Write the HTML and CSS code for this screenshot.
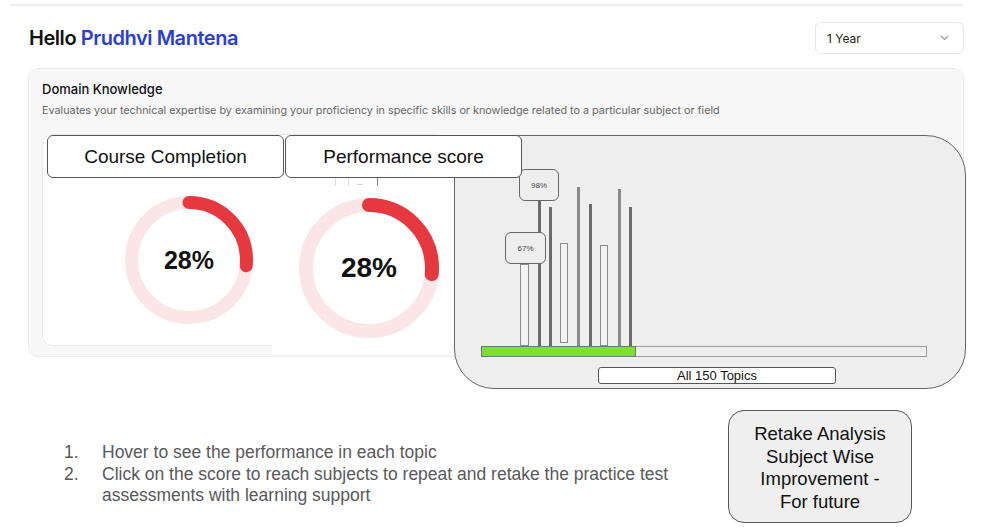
FILE: index.html
```html
<!DOCTYPE html>
<html lang="en">
<head>
  <meta charset="UTF-8" />
  <meta name="viewport" content="width=device-width, initial-scale=1.0" />
  <title>Domain Knowledge</title>
  <link rel="stylesheet" href="styles.css">
</head>
<body>

  <div class="topline"></div>

  <div class="header">
    <h1>Hello <span class="name">Prudhvi Mantena</span></h1>
    <div class="select">
      <span>1 Year</span>
      <svg width="9" height="6" viewBox="0 0 9 6"><path d="M1 1l3.5 3.5L8 1" fill="none" stroke="#999" stroke-width="1.1"/></svg>
    </div>
  </div>

  <div class="stage">
    <div class="card">
      <div class="card-title">Domain Knowledge</div>
      <div class="card-desc">Evaluates your technical expertise by examining your proficiency in specific skills or knowledge related to a particular subject or field</div>
      <div class="inner">
        <div class="donut donut-sm">
          <svg width="128" height="128" viewBox="0 0 128 128">
            <circle cx="64" cy="64" r="57.5" fill="none" stroke="#fbe6e7" stroke-width="13"/>
            <circle cx="64" cy="64" r="57.5" fill="none" stroke="#e5393f" stroke-width="13" stroke-linecap="round"
                    stroke-dasharray="96 400" transform="rotate(-90 64 64)"/>
          </svg>
          <span class="pct">28%</span>
        </div>
      </div>
    </div>

    <!-- pasted second chart -->
    <div class="snippet">
      <div class="crumbs"><i></i><b>--</b><i class="dark"></i></div>
      <div class="donut donut-lg">
        <svg width="140" height="140" viewBox="0 0 140 140">
          <circle cx="70" cy="70" r="63" fill="none" stroke="#fbe6e7" stroke-width="14"/>
          <circle cx="70" cy="70" r="63" fill="none" stroke="#e5393f" stroke-width="14" stroke-linecap="round"
                  stroke-dasharray="105 400" transform="rotate(-90 70 70)"/>
        </svg>
        <span class="pct">28%</span>
      </div>
    </div>

    <div class="panel">
      <div class="chart">
        <div class="bar hollow" style="left:39px;width:9px;height:82px"></div>
        <div class="bar line" style="left:57px;width:3px;height:146px"></div>
        <div class="bar line" style="left:68px;height:139px"></div>
        <div class="bar hollow" style="left:79px;width:8px;height:100px;bottom:3px"></div>
        <div class="bar line light" style="left:96px;height:159px"></div>
        <div class="bar line" style="left:108px;height:142px"></div>
        <div class="bar hollow" style="left:119px;width:8px;height:101px"></div>
        <div class="bar line light" style="left:137px;height:157px"></div>
        <div class="bar line" style="left:148px;height:139px"></div>

        <div class="tip" style="left:38px;top:33px;width:40px">98%</div>
        <div class="tip" style="left:24px;top:96px;width:41px">67%</div>
      </div>
      <div class="track"><div class="fill" style="width:153px"></div></div>
      <div class="topics">All 150 Topics</div>
    </div>

    <div class="labels">
      <div class="label-box">Course Completion</div>
      <div class="label-box">Performance score</div>
    </div>
  </div>

  <div class="notes">
    <ol class="steps">
      <li><span class="num">1.</span><span>Hover to see the performance in each topic</span></li>
      <li><span class="num">2.</span><span>Click on the score to reach subjects to repeat and retake the practice test assessments with learning support</span></li>
    </ol>
    <div class="retake">Retake Analysis Subject Wise Improvement - For future</div>
  </div>

</body>
</html>
```

FILE: styles.css
```css
* { box-sizing: border-box; }

html, body {
  margin: 0;
  padding: 0;
  background: #fff;
  color: #111;
  font-family: Inter, 'Liberation Sans', sans-serif;
  width: 981px;
  height: 532px;
  overflow: hidden;
}

.topline {
  height: 2px;
  margin: 4px 18px 0 10px;
  background: #efefef;
}

.header {
  display: flex;
  align-items: center;
  justify-content: space-between;
  height: 32px;
  margin-top: 16px;
  padding: 0 17px 0 29px;
}

h1 {
  margin: 0;
  font-size: 20px;
  font-weight: 600;
  letter-spacing: -0.45px;
}

h1 .name { color: #2b3dd3; }

.select {
  display: flex;
  align-items: center;
  justify-content: space-between;
  width: 149px;
  height: 32px;
  padding: 0 14px 0 11px;
  border: 1px solid #e7e7e7;
  border-radius: 6px;
  font-size: 12px;
  color: #222;
}

.stage {
  position: relative;
  margin-top: 14px;
  padding: 0 17px 0 28px;
}

.card {
  height: 289px;
  padding: 13px 13px 0;
  background: #f7f7f7;
  border: 1px solid #ececec;
  border-radius: 10px;
}

.card-title {
  font-size: 13px;
  font-weight: 500;
  line-height: 15px;
}

.card-desc {
  margin-top: 7px;
  font-size: 10.8px;
  line-height: 14px;
  color: #666;
}

.inner {
  width: 400px;
  height: 212px;
  margin-top: 16px;
  padding: 61px 0 0 82px;
  background: #fff;
  border: 1px solid #e9e9e9;
  border-radius: 10px;
}

.donut {
  position: relative;
  display: flex;
  align-items: center;
  justify-content: center;
}

.donut-sm { width: 128px; height: 128px; }
.donut-lg { width: 140px; height: 140px; margin: 10px 0 0 27px; }

.donut svg { position: absolute; left: 0; top: 0; }

.pct {
  position: relative;
  font-family: 'Liberation Sans', Arial, sans-serif;
  font-weight: bold;
  font-size: 25px;
}

.donut-lg .pct { font-size: 28px; }

.snippet {
  position: absolute;
  left: 272px;
  top: 110px;
  width: 190px;
  height: 177px;
  background: #fff;
}

.crumbs {
  display: flex;
  align-items: flex-start;
  height: 10px;
  margin-left: 63px;
  font-size: 6px;
  color: #888;
}

.crumbs i {
  width: 14px;
  height: 8px;
  border-left: 1px solid #ddd;
  border-right: 1px solid #ddd;
}

.crumbs b { font-weight: normal; margin: 2px 0 0 8px; width: 20px; }

.crumbs i.dark {
  width: 1px;
  border-left: 1px solid #888;
  border-right: none;
}

.panel {
  position: absolute;
  left: 454px;
  top: 67px;
  width: 512px;
  height: 254px;
  background: #eee;
  border: 1px solid #666;
  border-radius: 40px;
}

.chart {
  position: relative;
  width: 446px;
  height: 210px;
  margin-left: 26px;
}

.bar {
  position: absolute;
  bottom: 0;
}

.bar.line {
  width: 2.5px;
  background: #6a6a6a;
}

.bar.line.light { background: #8a8a8a; }

.bar.hollow {
  border: 1.5px solid #8c8c8c;
  background: #f4f4f4;
}

.tip {
  position: absolute;
  height: 32px;
  display: flex;
  align-items: center;
  justify-content: center;
  background: #eee;
  border: 1px solid #666;
  border-radius: 6px;
  font-family: 'Liberation Sans', Arial, sans-serif;
  font-size: 8px;
  color: #444;
}

.track {
  width: 446px;
  height: 11px;
  margin-left: 26px;
  background: #efefef;
  border: 1.5px solid #9c9c9c;
}

.fill {
  height: 100%;
  background: #7ae22a;
  outline: 1px solid #6d7d62;
}

.topics {
  width: 238px;
  height: 17px;
  margin: 10px 0 0 143px;
  background: #fff;
  border: 1px solid #555;
  border-radius: 3px;
  text-align: center;
  font-family: 'Liberation Sans', Arial, sans-serif;
  font-size: 13px;
  line-height: 15px;
}

.labels {
  position: absolute;
  left: 47px;
  top: 67px;
  display: flex;
  gap: 1px;
}

.label-box {
  width: 237px;
  height: 43px;
  display: flex;
  align-items: center;
  justify-content: center;
  background: #fff;
  border: 1px solid #555;
  border-radius: 6px;
  font-family: 'Liberation Sans', Arial, sans-serif;
  font-size: 19px;
}

.notes {
  display: flex;
  align-items: flex-start;
  margin-top: 53px;
  padding: 0 69px 0 64px;
}

.steps {
  list-style: none;
  margin: 32px 0 0;
  padding: 0;
  width: 620px;
  font-family: 'Liberation Sans', Arial, sans-serif;
  font-size: 17.5px;
  line-height: 21.5px;
  color: #595959;
}

.steps li { display: flex; }

.steps .num { width: 38px; flex: none; }

.retake {
  width: 184px;
  height: 113px;
  margin-left: auto;
  padding: 12px 21px 0;
  background: #efefef;
  border: 1px solid #555;
  border-radius: 16px;
  text-align: center;
  font-family: 'Liberation Sans', Arial, sans-serif;
  font-size: 18.5px;
  line-height: 22.5px;
  color: #111;
}
```
